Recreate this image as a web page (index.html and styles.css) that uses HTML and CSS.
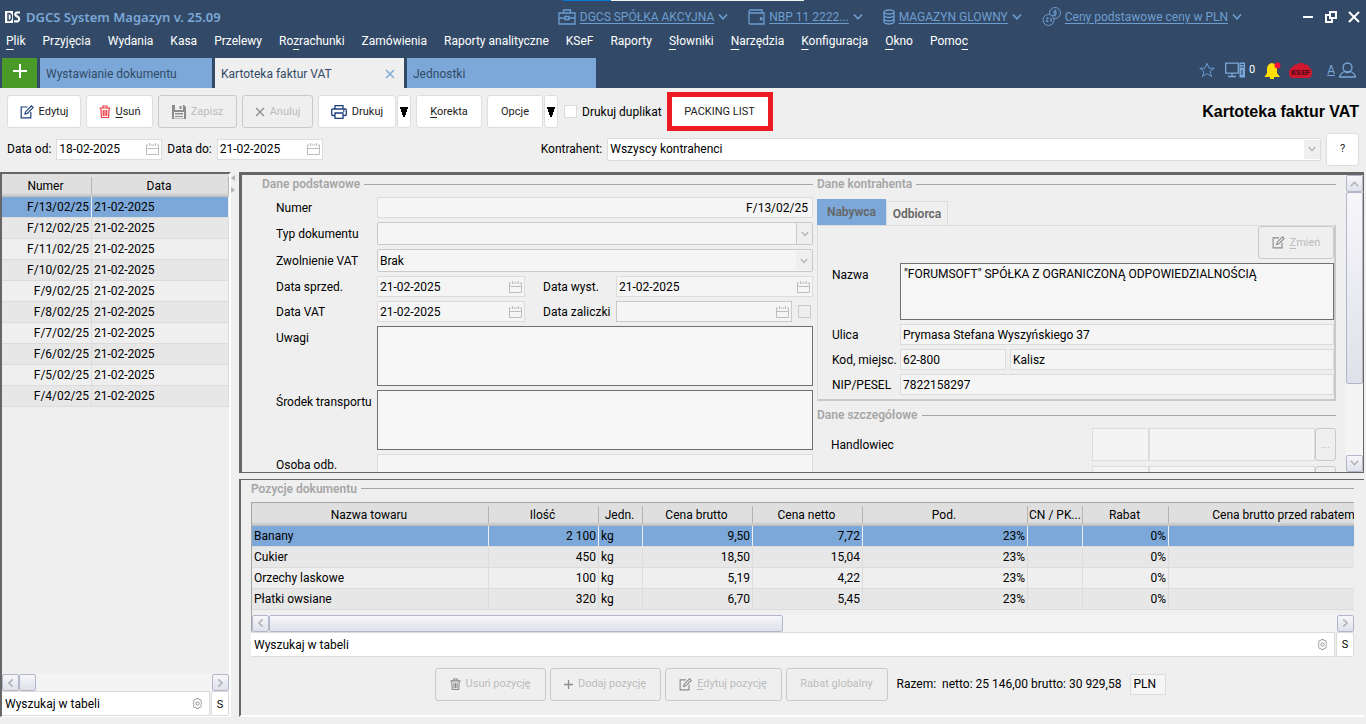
FILE: index.html
```html
<!DOCTYPE html>
<html lang="pl">
<head>
<meta charset="UTF-8">
<meta name="viewport" content="width=device-width, initial-scale=1.0">
<title>DGCS System Magazyn</title>
<link rel="stylesheet" href="styles.css">
</head>
<body>
<!-- shared icons -->
<svg class="sprite" aria-hidden="true">
    <symbol id="i-edit" viewBox="0 0 14 14"><path d="M7.5 2H1.2v10.8h9.600V7M5 9l.6-2.300L11.400.9l1.700 1.700L7.300 8.400z" fill="none" stroke="currentColor" stroke-width="1.200"/></symbol>
    <symbol id="i-trash" viewBox="0 0 12 14"><path d="M.5 3h11M4 3V1h4v2M1.800 3l.7 9.500h7L10.200 3M4.300 5v6M6 5v6M7.700 5v6" fill="none" stroke="currentColor" stroke-width="1.200"/></symbol>
    <symbol id="i-save" viewBox="0 0 14 14"><path d="M0 0h12l2 2v12H0z" fill="currentColor"/><path d="M3 0h8v5H3zM2 7h10v6.500H2z" fill="#efefef"/><path d="M7.500 1h2v3h-2zM3 8h8v1.500H3zM3 11h8v1H3z" fill="currentColor"/></symbol>
    <symbol id="i-x" viewBox="0 0 10 10"><path d="M1 1l8 8M9 1L1 9" stroke="currentColor" stroke-width="1.400" fill="none"/></symbol>
    <symbol id="i-print" viewBox="0 0 16 14"><path d="M4 4V.7h8V4M3.500 10.500H1.800Q.7 10.500.7 9.500V5q0-1 1.100-1h12.400q1.100 0 1.100 1v4.500q0 1-1.100 1h-1.700M4 8h8v5.300H4zM12 6h1.500" fill="none" stroke="currentColor" stroke-width="1.300"/></symbol>
    <symbol id="i-cal" viewBox="0 0 13 12"><path d="M.5 2v9.500h12V2M.5 5.500h12M0 2h2M4.500 2h4M11 2h2M3.500 0v3M9.500 0v3" fill="none" stroke="currentColor"/></symbol>
    <symbol id="i-plus" viewBox="0 0 14 14"><path d="M7 0v14M0 7h14" stroke="currentColor" stroke-width="2"/></symbol>
    <symbol id="i-gear" viewBox="0 0 12 12"><path d="M4.800.6h2.400l.6 1.200 1.500-.1 1 2-.6 1.200.9 1.100-.9 1.200.6 1.300-1.200 1.800-1.400-.1-.6 1.200H4.800l-.7-1.200-1.500.1-1.100-1.900.7-1.200L1.400 6l.8-1.200-.6-1.200 1.200-1.900 1.300.1z" fill="none" stroke="currentColor"/><circle cx="6" cy="6" r="1.800" fill="none" stroke="currentColor"/></symbol>
    <symbol id="i-chev" viewBox="0 0 10 6"><path d="M1 .5L5 4.800 9 .5" fill="none" stroke="currentColor" stroke-width="1.600"/></symbol>
    <symbol id="i-tri" viewBox="0 0 8 10"><path d="M0 0h8v2H7v3H6v3H5v2H3V8H2V5H1V2H0z" fill="currentColor"/></symbol>
</svg>

<header class="top">
    <div class="edge"></div>
    <div class="titlebar">
        <svg class="logo" viewBox="0 0 16 12"><path d="M0 0h8v12H0z" fill="#fff"/><path d="M3 2.500h1.500Q6.500 3 6.500 6T4.500 9.500H3z" fill="none" stroke="#324a67" stroke-width="1.500"/><path d="M15 1.500h-3Q9.700 2 10.500 4.200L13.700 6.500Q15 9.500 12.500 10.400H9" fill="none" stroke="#fff" stroke-width="2.200"/></svg>
        <span class="app-name">DGCS System Magazyn v. 25.09</span>
        <nav class="context">
            <a href="#"><svg width="18" height="16" viewBox="0 0 18 16"><path d="M1 4h16v11H1zM5.500 4V1h7v3M1 9h6M11 9h6M7 7.500h4v3H7z" fill="none" stroke="currentColor" stroke-width="1.300"/></svg><span>DGCS SPÓŁKA AKCYJNA</span><svg class="chev"><use href="#i-chev"/></svg></a>
            <a href="#"><svg width="17" height="16" viewBox="0 0 17 16"><path d="M14 4V1H2.500Q1 1 1 2.500V14q0 1 1 1h14V4H2.500Q1 4 1 2.500M12.500 9h1.500v1.500h-1.500z" fill="none" stroke="currentColor" stroke-width="1.300"/></svg><span>NBP 11 2222...</span><svg class="chev"><use href="#i-chev"/></svg></a>
            <a href="#"><svg width="12" height="16" viewBox="0 0 12 16"><ellipse cx="6" cy="3" rx="5" ry="2" fill="none" stroke="currentColor" stroke-width="1.300"/><path d="M1 3v10q1 2 5 2t5-2V3M1 6.500q1 2 5 2t5-2M1 10q1 2 5 2t5-2" fill="none" stroke="currentColor" stroke-width="1.300"/></svg><span>MAGAZYN GLOWNY</span><svg class="chev"><use href="#i-chev"/></svg></a>
            <a href="#"><svg width="19" height="19" viewBox="0 0 19 19"><circle cx="13" cy="6" r="5.500" fill="none" stroke="currentColor"/><circle cx="6.500" cy="13" r="5.500" fill="#324a67" stroke="currentColor"/><path d="M14.800 4.500Q13 3 11.800 4.500T13.500 6 13 8t-1.700-.8M13.200 2.500v7M4 11h2.500L4 14.500h2.500M9 10.500v4.500M8 13.500l2-1" fill="none" stroke="currentColor"/></svg><span>Ceny podstawowe ceny w PLN</span><svg class="chev"><use href="#i-chev"/></svg></a>
        </nav>
        <div class="win">
            <button aria-label="Minimalizuj"><svg width="12" height="12" viewBox="0 0 12 12"><path d="M1 6h10" stroke="#fff" stroke-width="2"/></svg></button>
            <button aria-label="Przywróć"><svg width="12" height="12" viewBox="0 0 12 12"><path d="M5 1h6v6H5zM4 4H1v7h6V8" fill="none" stroke="#fff" stroke-width="2"/></svg></button>
            <button aria-label="Zamknij"><svg width="12" height="12" viewBox="0 0 12 12"><path d="M1 1l10 10M11 1L1 11" stroke="#fff" stroke-width="2"/></svg></button>
        </div>
    </div>
    <nav class="menu">
        <a href="#"><u>P</u>lik</a><a href="#">Przyjęcia</a><a href="#">Wydania</a><a href="#">Kasa</a><a href="#">Przelewy</a><a href="#">Ro<u>z</u>rachunki</a><a href="#">Zamówienia</a><a href="#">Raporty analityczne</a><a href="#">KSeF</a><a href="#">Raporty</a><a href="#"><u>S</u>łowniki</a><a href="#"><u>N</u>arzędzia</a><a href="#"><u>K</u>onfiguracja</a><a href="#"><u>O</u>kno</a><a href="#">Pomo<u>c</u></a>
    </nav>
    <div class="tabs">
        <button class="add" aria-label="Nowa karta"><svg width="14" height="14"><use href="#i-plus"/></svg></button>
        <button class="tab tab-first">Wystawianie dokumentu</button>
        <button class="tab active">Kartoteka faktur VAT <svg width="10" height="10"><use href="#i-x"/></svg></button>
        <button class="tab">Jednostki</button>
        <div class="status">
            <svg width="16" height="16" viewBox="0 0 16 16"><path d="M8 1.200l2 5h5.200l-4.200 3.200 1.600 5.200L8 11.500l-4.600 3.100L5 9.400.8 6.200H6z" fill="none" stroke="#6b9bd2"/></svg>
            <svg class="pc" width="21" height="16" viewBox="0 0 21 16"><path d="M.7 1.200h12.600v10H.7zM7 11v3M3 14.500h8" fill="none" stroke="#7ba8d8" stroke-width="1.300"/><path d="M14.500.5H20v15h-5.500z" fill="#7ba8d8"/><path d="M15.500 2.500H19M15.500 5H19M17 8v5" stroke="#324a67" stroke-width="1.200"/></svg>
            <span class="count">0</span>
            <svg class="bell" width="17" height="17" viewBox="0 0 17 17"><path d="M8 1q5 1 5 6v4l3 4H.5l2.500-4V7q0-5 5-6zM6 15h4v2H6z" fill="#ffe000"/><circle cx="13.500" cy="3.500" r="3" fill="#f5103c"/></svg>
            <svg class="ksef" width="23" height="17" viewBox="0 0 23 17"><path d="M4 5Q4 2 8 2.500q4-3.500 8 0 4-.5 4 3 3 1 3 5 0 5.500-4 5.500H4q-4 0-4-5.500Q0 6 4 5z" fill="#cf1730"/><text x="11.500" y="13" text-anchor="middle">KSEF</text></svg>
            <a href="#" class="font-link">A</a>
            <svg width="17" height="16" viewBox="0 0 17 16"><circle cx="8.500" cy="5.500" r="4.500" fill="none" stroke="#7ba8d8" stroke-width="1.300"/><path d="M.5 15h16q-1-4-5-5.500-3 2-6 0-4 1.500-5 5.500z" fill="none" stroke="#7ba8d8" stroke-width="1.300"/></svg>
        </div>
    </div>
</header>

<div class="toolbar">
    <button class="btn w-edit"><svg class="navy" width="14" height="14"><use href="#i-edit"/></svg>Edytuj</button>
    <button class="btn w-del"><svg class="red" width="12" height="14"><use href="#i-trash"/></svg><span><u>U</u>suń</span></button>
    <button class="btn w-save" disabled><svg width="14" height="14"><use href="#i-save"/></svg>Zapisz</button>
    <button class="btn w-cancel" disabled><svg width="10" height="10"><use href="#i-x"/></svg>Anuluj</button>
    <div class="split"><button class="btn w-print"><svg class="navy" width="16" height="14"><use href="#i-print"/></svg>Drukuj</button><button class="btn arrow" aria-label="Więcej"><svg width="8" height="10"><use href="#i-tri"/></svg></button></div>
    <button class="btn w-corr"><span><u>K</u>orekta</span></button>
    <div class="split"><button class="btn w-opt">Opcje</button><button class="btn arrow" aria-label="Więcej"><svg width="8" height="10"><use href="#i-tri"/></svg></button></div>
    <label class="check"><input type="checkbox"> Drukuj duplikat</label>
    <button class="packing">PACKING LIST</button>
    <h1>Kartoteka faktur VAT</h1>
</div>

<div class="filters">
    <label for="dateFrom">Data od:</label>
    <div class="field date"><input type="text" id="dateFrom" value="18-02-2025"><svg class="cal"><use href="#i-cal"/></svg></div>
    <label for="dateTo">Data do:</label>
    <div class="field date"><input type="text" id="dateTo" value="21-02-2025"><svg class="cal"><use href="#i-cal"/></svg></div>
    <label for="client" class="client-label">Kontrahent:</label>
    <div class="field combo"><select id="client"><option>Wszyscy kontrahenci</option></select><span class="drop"><svg><use href="#i-chev"/></svg></span></div>
    <button class="btn help">?</button>
</div>

<main class="main">
    <section class="list">
        <div class="list-table">
            <table class="grid">
                <colgroup><col class="c-num"><col></colgroup>
                <thead><tr><th>Numer</th><th>Data</th></tr></thead>
                <tbody>
                    <tr class="sel"><td class="r">F/13/02/25</td><td>21-02-2025</td></tr>
                    <tr><td class="r">F/12/02/25</td><td>21-02-2025</td></tr>
                    <tr><td class="r">F/11/02/25</td><td>21-02-2025</td></tr>
                    <tr><td class="r">F/10/02/25</td><td>21-02-2025</td></tr>
                    <tr><td class="r">F/9/02/25</td><td>21-02-2025</td></tr>
                    <tr><td class="r">F/8/02/25</td><td>21-02-2025</td></tr>
                    <tr><td class="r">F/7/02/25</td><td>21-02-2025</td></tr>
                    <tr><td class="r">F/6/02/25</td><td>21-02-2025</td></tr>
                    <tr><td class="r">F/5/02/25</td><td>21-02-2025</td></tr>
                    <tr><td class="r">F/4/02/25</td><td>21-02-2025</td></tr>
                </tbody>
            </table>
        </div>
        <div class="hscroll"><button class="left" aria-label="W lewo"><svg><use href="#i-chev"/></svg></button><div class="thumb short"></div><button class="right" aria-label="W prawo"><svg><use href="#i-chev"/></svg></button></div>
        <div class="search"><div class="search-box"><input type="text" aria-label="Wyszukaj w tabeli" value="Wyszukaj w tabeli"><svg><use href="#i-gear"/></svg></div><button>S</button></div>
    </section>
    <div class="splitter"><svg width="4" height="18" viewBox="0 0 4 18"><path d="M4 0v6L0 3zM0 12v6l4-3z" fill="#b4b4b4"/></svg></div>

    <div class="panels">
        <section class="doc">
            <div class="doc-body">
                <div class="basic">
                    <h2>Dane podstawowe</h2>
                    <div class="form">
                        <label for="num">Numer</label>
                        <div class="field off"><input type="text" id="num" class="r" value="F/13/02/25" readonly></div>
                        <label for="type">Typ dokumentu</label>
                        <div class="field off combo dark"><select id="type" disabled><option></option></select><span class="drop boxed"><svg><use href="#i-chev"/></svg></span></div>
                        <label for="vat">Zwolnienie VAT</label>
                        <div class="field off combo dark"><select id="vat" disabled><option>Brak</option></select><span class="drop"><svg><use href="#i-chev"/></svg></span></div>
                        <label for="sold">Data sprzed.</label>
                        <div class="pair">
                            <div class="field off date"><input type="text" id="sold" value="21-02-2025" readonly><svg class="cal"><use href="#i-cal"/></svg></div>
                            <label for="issued">Data wyst.</label>
                            <div class="field off grow"><input type="text" id="issued" value="21-02-2025" readonly><svg class="cal"><use href="#i-cal"/></svg></div>
                        </div>
                        <label for="vatDate">Data VAT</label>
                        <div class="pair">
                            <div class="field off date"><input type="text" id="vatDate" value="21-02-2025" readonly><svg class="cal"><use href="#i-cal"/></svg></div>
                            <label for="advance">Data zaliczki</label>
                            <div class="field off grow dark"><input type="text" id="advance" readonly><svg class="cal"><use href="#i-cal"/></svg></div>
                            <input type="checkbox" aria-label="Zaliczka" disabled>
                        </div>
                        <label for="notes" class="top-label">Uwagi</label>
                        <textarea id="notes" readonly></textarea>
                        <label for="transport" class="top-label">Środek transportu</label>
                        <textarea id="transport" readonly></textarea>
                        <label for="person">Osoba odb.</label>
                        <div class="field off"><input type="text" id="person" readonly></div>
                    </div>
                </div>
                <div class="client">
                    <h2>Dane kontrahenta</h2>
                    <div class="subtabs"><button class="on">Nabywca</button><button>Odbiorca</button></div>
                    <div class="card">
                        <button class="btn change" disabled><svg width="13" height="13"><use href="#i-edit"/></svg><span><u>Z</u>mień</span></button>
                        <div class="form">
                            <label for="name" class="top-label">Nazwa</label>
                            <textarea id="name" readonly>"FORUMSOFT" SPÓŁKA Z OGRANICZONĄ ODPOWIEDZIALNOŚCIĄ</textarea>
                            <label for="street">Ulica</label>
                            <div class="field off"><input type="text" id="street" value="Prymasa Stefana Wyszyńskiego 37" readonly></div>
                            <label for="zip">Kod, miejsc.</label>
                            <div class="pair city">
                                <div class="field off date"><input type="text" id="zip" value="62-800" readonly></div>
                                <div class="field off grow"><input type="text" aria-label="Miejscowość" value="Kalisz" readonly></div>
                            </div>
                            <label for="nip">NIP/PESEL</label>
                            <div class="field off"><input type="text" id="nip" value="7822158297" readonly></div>
                        </div>
                    </div>
                    <h2 class="second">Dane szczegółowe</h2>
                    <div class="details"><label for="seller">Handlowiec</label><input type="text" id="seller" class="code" readonly><input type="text" aria-label="Nazwa handlowca" class="who" readonly><button class="btn" disabled>...</button></div>
                    <div class="details"><span></span><input type="text" aria-label="Kod" class="code" readonly><input type="text" aria-label="Opis" class="who" readonly><button class="btn" aria-label="Wybierz" disabled></button></div>
                </div>
            </div>
            <div class="vscroll"><button class="up" aria-label="W górę"><svg><use href="#i-chev"/></svg></button><div class="thumb"></div><button class="down" aria-label="W dół"><svg><use href="#i-chev"/></svg></button></div>
        </section>

        <section class="items">
            <h2>Pozycje dokumentu</h2>
            <div class="items-table">
                <table class="grid">
                    <colgroup><col class="c1"><col class="c2"><col class="c3"><col class="c4"><col class="c4"><col class="c6"><col class="c7"><col class="c8"><col class="c9"></colgroup>
                    <thead><tr><th>Nazwa towaru</th><th>Ilość</th><th>Jedn.</th><th>Cena brutto</th><th>Cena netto</th><th>Pod.</th><th class="tight">CN / PK...</th><th>Rabat</th><th>Cena brutto przed rabatem</th></tr></thead>
                    <tbody>
                        <tr class="sel"><td>Banany</td><td class="r">2 100</td><td>kg</td><td class="r">9,50</td><td class="r">7,72</td><td class="r">23%</td><td></td><td class="r">0%</td><td></td></tr>
                        <tr><td>Cukier</td><td class="r">450</td><td>kg</td><td class="r">18,50</td><td class="r">15,04</td><td class="r">23%</td><td></td><td class="r">0%</td><td></td></tr>
                        <tr><td>Orzechy laskowe</td><td class="r">100</td><td>kg</td><td class="r">5,19</td><td class="r">4,22</td><td class="r">23%</td><td></td><td class="r">0%</td><td></td></tr>
                        <tr><td>Płatki owsiane</td><td class="r">320</td><td>kg</td><td class="r">6,70</td><td class="r">5,45</td><td class="r">23%</td><td></td><td class="r">0%</td><td></td></tr>
                    </tbody>
                </table>
                <div class="hscroll"><button class="left" aria-label="W lewo"><svg><use href="#i-chev"/></svg></button><div class="thumb long"></div><button class="right" aria-label="W prawo"><svg><use href="#i-chev"/></svg></button></div>
            </div>
            <div class="search"><div class="search-box"><input type="text" aria-label="Wyszukaj w tabeli" value="Wyszukaj w tabeli"><svg><use href="#i-gear"/></svg></div><button>S</button></div>
            <div class="actions">
                <button class="btn w-a1" disabled><svg width="11" height="13"><use href="#i-trash"/></svg>Usuń pozycję</button>
                <button class="btn w-a1" disabled><svg width="9" height="9"><use href="#i-plus"/></svg>Dodaj pozycję</button>
                <button class="btn w-a3" disabled><svg width="13" height="13"><use href="#i-edit"/></svg><span><u>E</u>dytuj pozycję</span></button>
                <button class="btn w-a4" disabled>Rabat globalny</button>
                <span class="sum">Razem:&nbsp; netto: 25 146,00 brutto: 30 929,58</span>
                <div class="field off currency"><input type="text" aria-label="Waluta" value="PLN" readonly></div>
            </div>
        </section>
    </div>
</main>
</body>
</html>
```
FILE: styles.css
```css
* {
    box-sizing: border-box;
}

body {
    margin: 0;
    height: 100vh;
    display: flex;
    flex-direction: column;
    overflow: hidden;
    background-color: #efefef;
    color: #000;
    font-family: Roboto, "Liberation Sans", sans-serif;
    font-size: 12px;
    line-height: 16px;
}

button, input, select, textarea {
    font: inherit;
    color: inherit;
    margin: 0;
}

button {
    padding: 0;
    border: none;
    background: none;
}

svg {
    flex: none;
}

.sprite {
    display: none;
}

.r {
    text-align: right;
}

/* header */
.top {
    position: relative;
    background-color: #324a67;
    height: 88px;
    display: flex;
    flex-direction: column;
}

.edge {
    position: absolute;
    top: 0;
    left: 563px;
    width: 241px;
    height: 1px;
    background: linear-gradient(to right, #0078d7 20%, #f0f0f0 20%);
}

.titlebar {
    display: flex;
    align-items: center;
    height: 33px;
    padding: 0 6px 0 5px;
}

.logo {
    width: 16px;
    height: 12px;
    margin-right: 5px;
}

.app-name {
    font-family: "Noto Sans", sans-serif;
    font-weight: 600;
    font-size: 13px;
    color: #7ba8d8;
}

.context {
    display: flex;
    gap: 20px;
    margin-left: auto;
    margin-right: 60px;
}

.context a {
    display: flex;
    align-items: center;
    gap: 4px;
    height: 19px;
    color: #6e9dd0;
    text-decoration: none;
}

.context a span {
    text-decoration: underline;
    text-underline-offset: 2px;
}

.chev {
    width: 10px;
    height: 6px;
}

.win {
    display: flex;
    gap: 11px;
}

.win button, .win svg {
    display: block;
}

.menu {
    display: flex;
    gap: 17px;
    padding-left: 6px;
}

.menu a {
    color: #fff;
    text-decoration: none;
}

.menu u {
    text-underline-offset: 4px;
}

.tabs {
    display: flex;
    gap: 3px;
    margin-top: auto;
    height: 30px;
    padding: 0 10px 0 2px;
}

.add {
    width: 35px;
    background-color: #4a9a2a;
    color: #fff;
}

.tab {
    display: flex;
    align-items: center;
    justify-content: space-between;
    width: 189px;
    padding: 1px 9px 0 6px;
    background-color: #7ba8d8;
    color: #324a67;
}

.tab-first {
    width: 172px;
}

.tab.active {
    background-color: #efefef;
}

.tab svg {
    color: #7ba8d8;
}

.status {
    display: flex;
    align-items: center;
    margin-left: auto;
    height: 24px;
}

.pc {
    margin-left: 10px;
}

.count {
    color: #fff;
    font-size: 11px;
    margin-left: 3px;
}

.bell {
    margin-left: 9px;
}

.ksef {
    margin-left: 8px;
}

.ksef text {
    font-family: Roboto, sans-serif;
    font-size: 8px;
    font-weight: 900;
    fill: #5a0a18;
}

.font-link {
    margin: 0 4px 0 15px;
    color: #7ba8d8;
}

/* toolbar */
.btn {
    display: flex;
    align-items: center;
    justify-content: center;
    gap: 5px;
    height: 33px;
    background-color: #fff;
    border: 1px solid #dedede;
    border-radius: 3px;
    font-size: 11px;
    color: #222;
}

.btn:disabled {
    background-color: #efefef;
    border-color: #c9c9c9;
    color: #bcbcbc;
}

.btn:disabled svg {
    color: #8c8c8c;
}

.btn u {
    text-underline-offset: 2px;
}

.navy {
    color: #1d3f7c;
}

.red {
    color: #ee3a43;
}

.toolbar {
    display: flex;
    align-items: center;
    gap: 5px;
    height: 46px;
    padding: 1px 7px 0;
}

.split {
    display: flex;
    gap: 1px;
}

.arrow {
    width: 14px;
    color: #000;
}

.w-edit {
    width: 74px;
}

.w-del {
    width: 67px;
}

.w-save {
    width: 79px;
}

.w-cancel {
    width: 71px;
}

.w-print {
    width: 78px;
}

.w-corr {
    width: 66px;
}

.w-opt {
    width: 56px;
}

.check {
    display: flex;
    align-items: center;
    gap: 5px;
    margin-left: 1px;
}

input[type="checkbox"] {
    appearance: none;
    width: 13px;
    height: 13px;
    flex: none;
    background-color: #fff;
    border: 1px solid #dcdcdc;
}

input[type="checkbox"]:disabled {
    background-color: #efefef;
    border-color: #c9c9c9;
}

.packing {
    width: 106px;
    height: 39px;
    background-color: #fff;
    border: 5px solid #ed1c24;
    font-size: 11px;
    color: #222;
}

h1 {
    margin: 0 0 0 auto;
    font-family: "Liberation Sans", sans-serif;
    font-size: 16px;
    line-height: 20px;
}

/* fields */
.field {
    display: flex;
    align-items: center;
    height: 21px;
    background-color: #fff;
    border: 1px solid #dcdcdc;
}

.field input, .field select {
    flex: 1;
    min-width: 0;
    width: 100%;
    height: 100%;
    padding: 0 2px;
    border: none;
    background: none;
    appearance: none;
    opacity: 1;
    color: #000;
}

.field .r {
    padding-right: 4px;
}

.off {
    background-color: #f5f5f5;
}

.dark {
    border-color: #c9c9c9;
}

.combo {
    height: 23px;
    border-radius: 2px;
}

.cal {
    width: 13px;
    height: 12px;
    margin-right: 2px;
    color: #bdbdbd;
}

.drop {
    display: flex;
    align-items: center;
    justify-content: center;
    width: 16px;
    height: 19px;
    background-color: #efefef;
    color: #b4b4b4;
}

.drop svg {
    width: 8px;
    height: 6px;
}

.boxed {
    height: 21px;
    border-left: 1px solid #c9c9c9;
}

.filters {
    display: flex;
    align-items: center;
    gap: 5px;
    height: 38px;
    padding: 0 7px 8px;
}

.filters .date {
    width: 106px;
}

.filters .combo {
    flex: 1;
}

.client-label {
    margin-left: 213px;
}

.help {
    width: 33px;
}

/* main area */
.main {
    flex: 1;
    display: flex;
    min-height: 0;
    padding: 0 2px 7px 0;
}

.list {
    display: flex;
    flex-direction: column;
    width: 231px;
    border-top: 2px solid #666;
    border-left: 2px solid #666;
    border-right: 2px solid #fff;
    border-bottom: 1px solid #fff;
}

.list-table {
    flex: 1;
}

.splitter {
    width: 8px;
    padding-top: 3px;
}

.grid {
    width: 100%;
    table-layout: fixed;
    border-collapse: separate;
    border-spacing: 0;
}

.c-num {
    width: 90px;
}

th {
    height: 23px;
    padding: 1px 3px 0 0;
    font-weight: normal;
    white-space: nowrap;
    background: linear-gradient(#b4b4b4, #b4b4b4) right 3px / 1px 17px no-repeat, linear-gradient(#dfdfdf 82%, #bcbcbc);
}

td {
    height: 21px;
    padding: 0 2px;
    border-right: 1px solid #dcdcdc;
    border-bottom: 1px solid #dcdcdc;
}

tbody tr:nth-child(even) {
    background-color: #e7e7e7;
}

tbody .sel td {
    background-color: #7ba8d8;
    border-right-color: #efefef;
}

.hscroll {
    display: flex;
    height: 17px;
    background-color: #f4f4f4;
}

.hscroll button, .vscroll button, .thumb {
    display: flex;
    align-items: center;
    justify-content: center;
    width: 17px;
    height: 17px;
    border: 1px solid #b3b6cb;
    border-radius: 2px;
    background: linear-gradient(#f7f7fa, #dfe1ea);
    color: #b0b0b0;
}

.hscroll svg, .vscroll svg {
    width: 9px;
    height: 6px;
}

.left svg {
    transform: rotate(90deg);
}

.right {
    margin-left: auto;
}

.right svg {
    transform: rotate(-90deg);
}

.up svg {
    transform: rotate(180deg);
}

.hscroll .long {
    width: 514px;
}

.search {
    display: flex;
    gap: 1px;
    height: 25px;
}

.search-box {
    flex: 1;
    min-width: 0;
    display: flex;
    align-items: center;
    background-color: #fff;
    border: 1px solid #dcdcdc;
    border-left: none;
    padding-right: 6px;
}

.search-box input {
    flex: 1;
    min-width: 0;
    border: none;
    padding: 1px 3px 0;
    background: none;
}

.search-box svg {
    width: 11px;
    height: 11px;
    color: #8c8c8c;
}

.search button {
    width: 18px;
    padding-top: 2px;
    background-color: #fff;
    border: 1px solid #dcdcdc;
    border-radius: 2px;
    font-size: 11px;
}

.panels {
    flex: 1;
    min-width: 0;
    display: flex;
    flex-direction: column;
    gap: 6px;
}

h2 {
    display: flex;
    align-items: center;
    gap: 4px;
    margin: 0;
    font-size: 12px;
    line-height: 16px;
    font-weight: 600;
    color: #a6a6a6;
}

h2::after {
    content: "";
    flex: 1;
    height: 1px;
    background-color: #a6a6a6;
}

.doc {
    flex: 301 1 0;
    min-height: 0;
    display: flex;
    border-style: solid;
    border-width: 3px 1px 1px 3px;
    border-color: #666;
}

.doc-body {
    flex: 1;
    display: flex;
    gap: 4px;
    overflow: hidden;
    padding: 1px 10px 0 20px;
}

.basic {
    flex: 551;
    min-width: 0;
}

.client {
    flex: 519;
    min-width: 0;
}

.form {
    display: grid;
    grid-template-columns: 101px 1fr;
    row-gap: 4px;
    align-items: center;
    padding-left: 14px;
}

.basic .form {
    margin-top: 5px;
}

textarea {
    display: block;
    width: 100%;
    height: 60px;
    padding: 2px 3px;
    border: 1px solid #707070;
    outline: none;
    resize: none;
    background-color: #f6f6f6;
}

.top-label {
    align-self: start;
    padding-top: 4px;
}

.pair {
    display: flex;
    align-items: center;
}

.pair .date {
    width: 148px;
    margin-right: 18px;
}

.pair label {
    width: 73px;
}

.pair .grow {
    flex: 1;
}

.pair input[type="checkbox"] {
    margin: 0 2px 0 6px;
}

.pair.city .date {
    width: 106px;
    margin-right: 4px;
}

.subtabs {
    display: flex;
    align-items: flex-end;
    margin-top: 7px;
}

.subtabs button {
    width: 62px;
    height: 24px;
    border: 1px solid #dcdcdc;
    border-bottom: none;
    font-weight: 600;
    color: #666;
}

.subtabs .on {
    width: 69px;
    height: 26px;
    background-color: #7ba8d8;
    border: none;
}

.card {
    border: 1px solid #dcdcdc;
    border-right: 2px solid #c9c9c9;
    border-bottom: 2px solid #c9c9c9;
    padding-bottom: 4px;
}

.card .form {
    grid-template-columns: 68px 1fr;
    margin-top: 4px;
}

.card textarea {
    height: 57px;
}

.change {
    width: 76px;
    margin-left: auto;
}

.second {
    margin-top: 6px;
}

.details {
    display: flex;
    align-items: center;
    height: 33px;
    margin-top: 5px;
}

.details label, .details span {
    flex: 1;
    padding-left: 14px;
}

.details input {
    height: 33px;
    background-color: #f4f4f4;
    border: 1px solid #dcdcdc;
}

.details .code {
    width: 57px;
}

.details .who {
    width: 166px;
}

.details .btn {
    width: 21px;
}

.vscroll {
    display: flex;
    flex-direction: column;
    background-color: #f4f4f4;
}

.vscroll .thumb {
    height: 192px;
}

.vscroll .down {
    margin-top: auto;
}

.items {
    flex: 238 1 0;
    min-height: 0;
    border-top: 1px solid #666;
    border-left: 2px solid #666;
    border-bottom: 2px solid #fff;
    padding: 1px 10px 0;
}

.items-table {
    margin-top: 5px;
    overflow: hidden;
    border-top: 1px solid #a6a6a6;
    border-left: 1px solid #a6a6a6;
}

.items-table .grid {
    width: 1149px;
}

.items-table .hscroll {
    margin-top: 5px;
}

.c1 {
    width: 237px;
}

.c2 {
    width: 110px;
}

.c3 {
    width: 44px;
}

.c4 {
    width: 110px;
}

.c6 {
    width: 165px;
}

.c7 {
    width: 55px;
}

.c8 {
    width: 86px;
}

.c9 {
    width: 232px;
}

.tight {
    padding-right: 1px;
}

.actions {
    display: flex;
    align-items: center;
    justify-content: center;
    gap: 4px;
    margin-top: 11px;
    padding-right: 4px;
}

.w-a1 {
    width: 111px;
}

.w-a3 {
    width: 117px;
}

.w-a4 {
    width: 102px;
}

.sum {
    margin: 0 5px;
}

.currency {
    width: 36px;
}
```
